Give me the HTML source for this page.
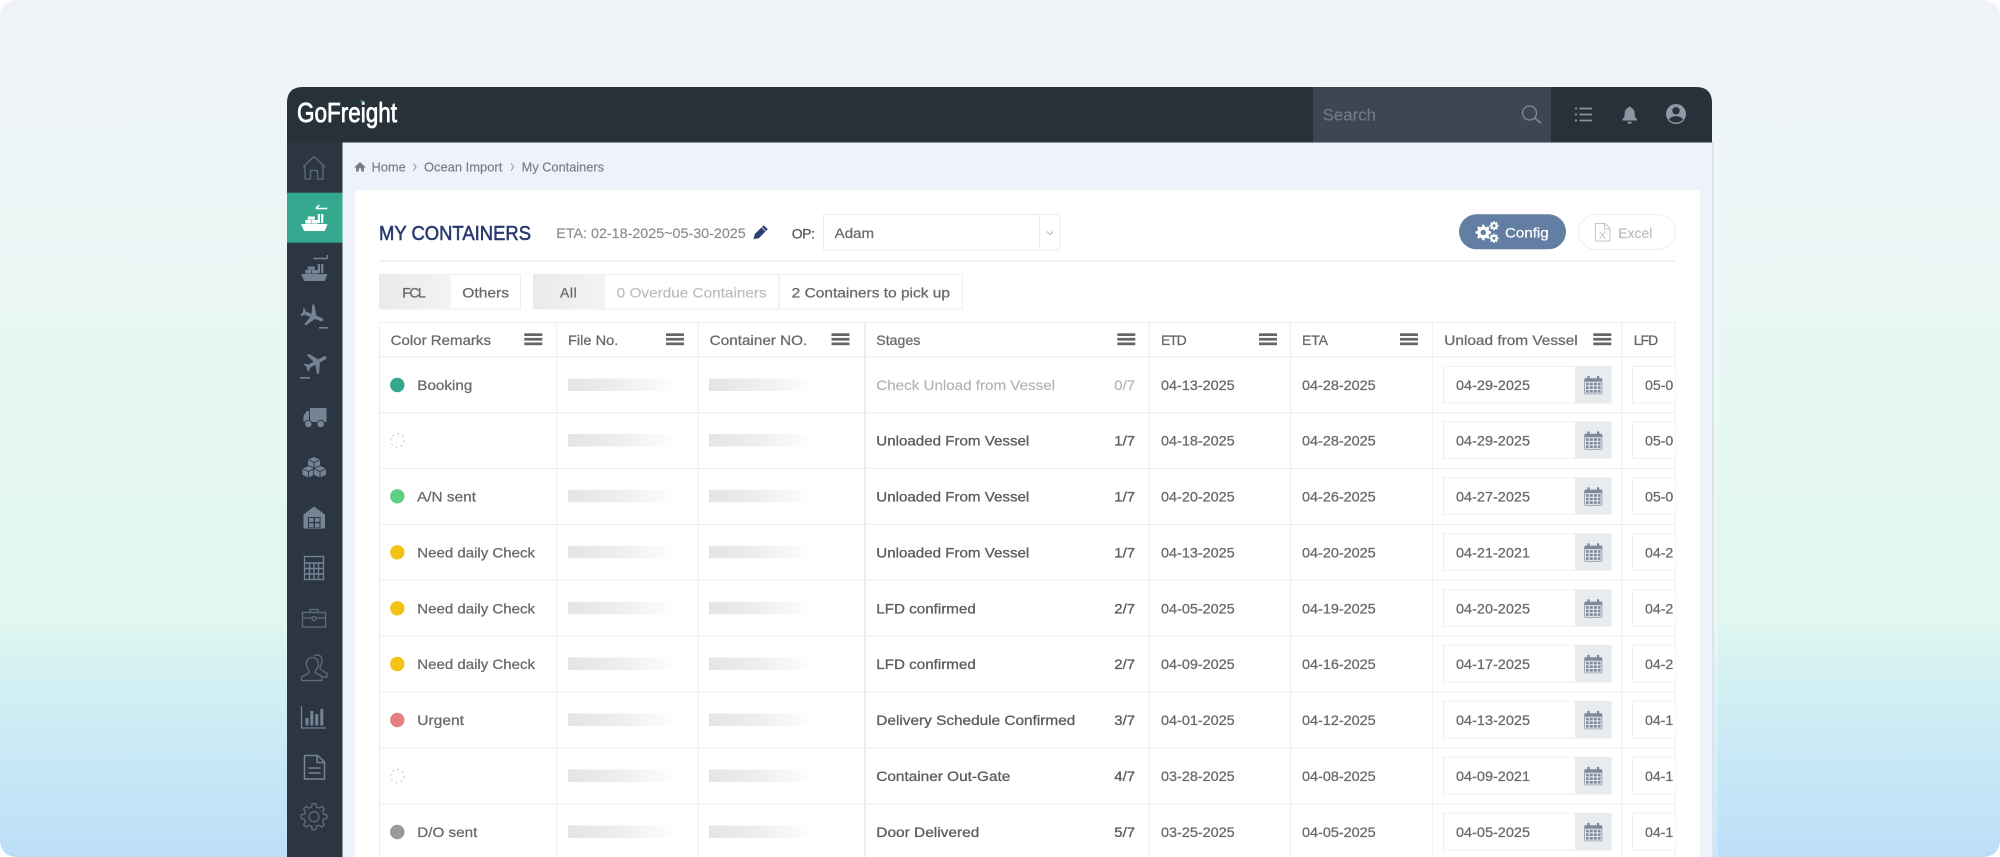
<!DOCTYPE html>
<html lang="en"><head><meta charset="utf-8"><title>GoFreight - My Containers</title>
<style>
html,body{margin:0;padding:0;background:#fff;width:2000px;height:857px;overflow:hidden}
svg{display:block;filter:blur(.35px)}
text{font-family:"Liberation Sans",sans-serif;font-size:14px}
.t{fill:#6a6a6a;stroke:#6a6a6a;stroke-width:.28}
.s{fill:#5c5c5c;stroke:#5c5c5c;stroke-width:.3}
.m{fill:#b2b2b2;stroke:#b2b2b2;stroke-width:.15}
.ic{fill:none;stroke:#5f6c7d;stroke-width:1.3}
.fi{fill:#768395}
</style></head><body>
<svg xmlns="http://www.w3.org/2000/svg" width="2000" height="857" viewBox="0 0 2000 857">
<defs>
<linearGradient id="bg" x1="0" y1="0" x2="0" y2="1">
<stop offset="0" stop-color="#f0f3f8"/><stop offset=".27" stop-color="#ebf6f5"/><stop offset=".55" stop-color="#e4f7f1"/><stop offset=".72" stop-color="#e1f7f0"/><stop offset=".8" stop-color="#d2eff3"/><stop offset=".9" stop-color="#c6e7f6"/><stop offset="1" stop-color="#bcdff8"/>
</linearGradient>
<linearGradient id="sk"><stop offset="0" stop-color="#e4e4e4"/><stop offset=".5" stop-color="#efefef"/><stop offset="1" stop-color="#ffffff"/></linearGradient>
<linearGradient id="tabf"><stop offset="0" stop-color="#eaeaea"/><stop offset="1" stop-color="#f3f3f3"/></linearGradient>
<g id="sk2"><rect x="568" y="-6.5" width="110" height="12.5" fill="url(#sk)"/><rect x="709" y="-6.5" width="105" height="12.5" fill="url(#sk)"/></g>
<g id="ham"><rect width="18" height="2.7" fill="#666"/><rect y="4.6" width="18" height="2.7" fill="#666"/><rect y="9.2" width="18" height="2.7" fill="#666"/></g>
<g id="cal"><rect x="-9" y="-6.5" width="18" height="16" rx="1" fill="#7d8a99"/><rect x="-6" y="-9" width="2.4" height="4.5" rx="1" fill="#7d8a99"/><rect x="3.6" y="-9" width="2.4" height="4.5" rx="1" fill="#7d8a99"/>
<path d="M-7.8-2.5H7.8V8.3H-7.8ZM-7.8 1.1H7.8M-7.8 4.7H7.8M-4.1-2.5V8.3M0-2.5V8.3M4.1-2.5V8.3" fill="none" stroke="#e9ecef" stroke-width="1"/></g>
<g id="inp"><rect x="1443.5" y="-18.7" width="167.5" height="36.7" fill="#fff" stroke="#eeeeee"/><rect x="1575" y="-19" width="36" height="37" fill="#e9ecef"/><use href="#cal" x="1593.3" y="-.2"/><path d="M1675-18.7H1632.5V18H1675" fill="#fff" stroke="#eeeeee"/></g>
<path id="gearp" d="M9.7-2.4L12.9-1.8 12.9 1.8 9.7 2.4 8.6 5.2 10.4 7.8 7.8 10.4 5.2 8.6 2.4 9.7 1.8 12.9-1.8 12.9-2.4 9.7-5.2 8.6-7.8 10.4-10.4 7.8-8.6 5.2-9.7 2.4-12.9 1.8-12.9-1.8-9.7-2.4-8.6-5.2-10.4-7.8-7.8-10.4-5.2-8.6-2.4-9.7-1.8-12.9 1.8-12.9 2.4-9.7 5.2-8.6 7.8-10.4 10.4-7.8 8.6-5.2Z"/>
<g id="shipb"><path d="M-13.2 6H13.2L10.5 13H-10.2Z"/><rect x="-9" y="2" width="6" height="3.6"/><rect x="-6.5" y="-1.5" width="7" height="3.2"/><rect x="-2.5" y="2" width="6" height="3.6"/><rect x="3.5" y="-4" width="2.2" height="9"/><rect x="6.8" y="-4" width="2.2" height="9"/></g>
<path id="plane" d="M21 16v-2l-8-5V3.5c0-.83-.67-1.5-1.5-1.5S10 2.67 10 3.5V9l-8 5v2l8-2.5V19l-2 1.5V22l3.5-1 3.5 1v-1.5L13 19v-5.5l8 2.5z"/>
<clipPath id="win"><path d="M287 857V103Q287 87 303 87H1696Q1712 87 1712 103V857Z"/></clipPath>
</defs>

<rect width="2000" height="857" rx="16" fill="url(#bg)"/>
<rect x="1712" y="142" width="2" height="715" fill="#dfe3ec"/>
<rect x="1714" y="142" width="4" height="715" fill="#ffffff" opacity=".25"/>

<g clip-path="url(#win)">
<rect x="287" y="87" width="1425" height="770" fill="#eef2fb"/>
<rect x="287" y="87" width="1425" height="55.5" fill="#27313a"/>
<rect x="287" y="142.5" width="55.5" height="715" fill="#2c3643"/>
<rect x="1313" y="87" width="238" height="55.5" fill="#3c4654"/>
<rect x="287" y="192.7" width="55.5" height="50" fill="#35a990"/>
</g>

<!-- Top bar -->
<text x="297" y="122" style="font-size:28px" fill="#fff" stroke="#fff" stroke-width=".8" textLength="100" lengthAdjust="spacingAndGlyphs">GoFreight</text>
<circle cx="362" cy="101.5" r="1.4" fill="#35a990"/>
<text x="1322.7" y="120.7" style="font-size:17px" fill="#6f7a88" stroke="#6f7a88" stroke-width=".2" textLength="53.3" lengthAdjust="spacingAndGlyphs">Search</text>
<circle cx="1529.5" cy="113" r="7" fill="none" stroke="#7f8a96" stroke-width="1.3"/><path d="M1534.5 118L1541 123" stroke="#7f8a96" stroke-width="1.6" fill="none"/>
<path d="M1579.5 108.5H1592M1579.5 114.5H1592M1579.5 120.5H1592" stroke="#8a95a1" stroke-width="1.8"/><path d="M1575 108.5H1577M1575 114.5H1577M1575 120.5H1577" stroke="#8a95a1" stroke-width="1.8"/>
<path d="M1629.7 106.5c-.9 0-1.3.6-1.3 1.3-2.6.8-3.7 3-3.7 5.7 0 3-1 4.6-2.3 5.8v1.2h14.6v-1.2c-1.3-1.2-2.3-2.8-2.3-5.8 0-2.7-1.1-4.9-3.7-5.7 0-.7-.4-1.3-1.3-1.3zM1627.5 121.7a2.2 2.2 0 0 0 4.4 0z" fill="#8a95a1"/>
<circle cx="1676" cy="114" r="10" fill="#8e99a5"/><circle cx="1676" cy="110.8" r="3.7" fill="#27313a"/><path d="M1669 119.5c1.5-2.4 4-3.2 7-3.2s5.5.8 7 3.2c-1.7 2-4.2 3-7 3s-5.3-1-7-3z" fill="#27313a"/>

<!-- Sidebar icons -->
<g transform="translate(314,168)" class="ic"><path d="M-11-1L0-11.5 11-1M-9-3V11H-3.5V2.5H3.500V11H9V-3"/></g>
<g transform="translate(314.3,218)" fill="#fff"><use href="#shipb"/><path d="M13-9.5H1.5M1.5-9.5L5-13" fill="none" stroke="#fff" stroke-width="1.5"/></g>
<g transform="translate(314.3,268)" class="fi"><use href="#shipb"/><path d="M-1-9.5H13M13-9.5V-13" fill="none" stroke="#768395" stroke-width="1.5"/></g>
<g transform="translate(312.5,316) rotate(112) scale(1.15) translate(-11.5,-12)" class="fi"><use href="#plane"/></g><rect x="319" y="327" width="9" height="1.6" class="fi"/>
<g transform="translate(316,362.5) rotate(62) scale(1.15) translate(-11.5,-12)" class="fi"><use href="#plane"/></g><rect x="300" y="377" width="10" height="1.6" class="fi"/>
<g class="fi"><path d="M310 408H326.5V422H310ZM303.5 422V415.5L307 411H309V422Z"/><circle cx="308.3" cy="424" r="3.8" stroke="#2c3643"/><circle cx="320.7" cy="424" r="3.8" stroke="#2c3643"/></g>
<g class="fi" stroke="#2c3643" stroke-width=".9"><path d="M314 456.5L320.5 459.5V466L314 469 307.5 466V459.5Z"/><path d="M308.5 465.5L315 468.5V475L308.5 478 302 475V468.5Z"/><path d="M320 465.5L326.5 468.5V475L320 478 313.5 475V468.5Z"/><path d="M307.500 459.500L314 462.500 320.500 459.500M314 462.500V469M302 468.500L308.500 471.500 315 468.500M308.500 471.500V478M313.500 468.500L320 471.500 326.500 468.500M320 471.500V478" fill="none"/></g>
<path class="fi" fill-rule="evenodd" d="M314 506.5L325 514.5V528.5H303.5V514.5ZM308 517V528H320.5V517ZM309 518H313.6V522H309ZM315 518H319.5V522H315ZM309 523.2H313.6V527.5H309ZM315 523.2H319.5V527.5H315Z"/>
<g><rect x="304.5" y="556.5" width="19" height="23" fill="none" stroke="#768395" stroke-width="1.3"/><path d="M304.5 563H323.5M304.5 568.5H323.5M304.5 574H323.5M309.5 563V580M314 563V580M318.5 563V580" fill="none" stroke="#768395" stroke-width="1.4"/></g>
<g class="ic"><rect x="302.5" y="612.5" width="23" height="14.5"/><path d="M310 612.5V609.5H318V612.5M302.5 618H311.5M316.5 618H325.5"/><circle cx="314" cy="618.5" r="2"/></g>
<g class="ic"><path d="M301.5 680.5V677L308 673.5C309.5 672.5 309.5 671 308.5 670 306.5 667.5 306 664.5 306.5 662 307 659 309.5 657.5 312 657.5S317.5 659 318 662C318.5 664.5 318 667.5 316 670 315 671 315 672.5 316.5 673.5L322 676.5V680.5Z"/><path d="M314 656C316 654.5 320 654.5 321.5 657.5 322.5 660 322 664 320 666.5 319.5 668 320 669 321.5 670L327 673.5V677H323"/></g>
<g><path d="M301.5 706V728H326" fill="none" stroke="#768395" stroke-width="1.3"/><rect class="fi" x="305.5" y="718" width="3" height="7.5"/><rect class="fi" x="310.3" y="711" width="3" height="14.5"/><rect class="fi" x="315.3" y="714" width="3" height="11.5"/><rect class="fi" x="320.3" y="709" width="3" height="16.5"/></g>
<g fill="none" stroke="#768395" stroke-width="1.5"><path d="M304.5 755.5H317.5L324.5 762V779H304.5ZM317 755.5V762.5H324.5M308.5 768H320.5M308.5 773H320.5"/></g>
<g transform="translate(314,816.7)" class="ic"><use href="#gearp"/><circle r="5"/></g>

<!-- Panel -->
<path d="M360 162L366 167.500H364V171.500H361.200V168.500H358.800V171.500H356V167.500H354Z" fill="#757f8c"/>
<text x="371.7" y="171.5" style="font-size:12.5px" fill="#737d8a" stroke="#737d8a" stroke-width=".15" textLength="34" lengthAdjust="spacingAndGlyphs">Home</text>
<path d="M413.5 163.5L416 167 413.5 170.5M511 163.5L513.5 167 511 170.5" fill="none" stroke="#8a93a0" stroke-width="1"/>
<text x="424" y="171.5" style="font-size:12.5px" fill="#737d8a" stroke="#737d8a" stroke-width=".15" textLength="78.3" lengthAdjust="spacingAndGlyphs">Ocean Import</text>
<text x="521.7" y="171.5" style="font-size:12.5px" fill="#737d8a" stroke="#737d8a" stroke-width=".15" textLength="82.3" lengthAdjust="spacingAndGlyphs">My Containers</text>
<rect x="355" y="190" width="1345" height="667" fill="#fff"/>

<text x="379" y="240" style="font-size:20px" fill="#2a3a6e" stroke="#2a3a6e" stroke-width=".55" textLength="152" lengthAdjust="spacingAndGlyphs">MY CONTAINERS</text>
<text x="556.3" y="238" fill="#8c8c8c" stroke="#8c8c8c" stroke-width=".15" textLength="189.4" lengthAdjust="spacingAndGlyphs">ETA: 02-18-2025~05-30-2025</text>
<path d="M753.5 239.3L754.8 234 763.7 225.200 767.800 229.300 758.900 238.100Z" fill="#2c3e75"/><path d="M761.800 227.200L765.800 231.200" stroke="#fff" stroke-width=".7"/>
<text x="791.7" y="238.3" class="s" textLength="23.3">OP:</text>
<rect x="823.5" y="214.5" width="236.5" height="35.5" fill="#fff" stroke="#eeeeee"/><path d="M1039.5 214.5V250" stroke="#eeeeee"/>
<path d="M1047 231.5L1050 234.5 1053 231.5" fill="none" stroke="#b5b5b5"/>
<text x="834.7" y="238" class="t" textLength="39.3" lengthAdjust="spacingAndGlyphs">Adam</text>

<rect x="1459" y="214.3" width="107" height="35" rx="17.5" fill="#627fa3"/>
<g fill="#fff"><use href="#gearp" transform="translate(1483.3,232.5) scale(.6)"/><use href="#gearp" transform="translate(1494,225.8) scale(.36)"/><use href="#gearp" transform="translate(1494,238.3) scale(.36)"/></g>
<g fill="#627fa3"><circle cx="1483.3" cy="232.5" r="2.7"/><circle cx="1494" cy="225.8" r="1.5"/><circle cx="1494" cy="238.3" r="1.5"/></g>
<text x="1505" y="237.3" fill="#fff" stroke="#fff" stroke-width=".2" textLength="43.7" lengthAdjust="spacingAndGlyphs">Config</text>
<rect x="1578.5" y="214.5" width="97" height="35" rx="17.5" fill="#fff" stroke="#eeeeee"/>
<path d="M1595.5 223.5H1605L1610 228.5V241H1595.5ZM1604.5 223.5V229H1610M1599.5 231.5L1605.5 239M1605.5 231.5L1599.5 239" fill="none" stroke="#c4c4c4"/>
<text x="1618.3" y="238" fill="#bcbcbc" stroke="#bcbcbc" stroke-width=".2" textLength="34" lengthAdjust="spacingAndGlyphs">Excel</text>

<rect x="379" y="260.5" width="1296" height="1.5" fill="#eeeeee"/>

<!-- Tabs -->
<rect x="379.5" y="274.5" width="141" height="34.5" fill="#fff" stroke="#eeeeee"/>
<rect x="379" y="274" width="71.5" height="35" fill="url(#tabf)"/>
<text x="402.3" y="297.3" class="t" textLength="23.4">FCL</text>
<text x="462.3" y="297.3" class="t" textLength="46.7" lengthAdjust="spacingAndGlyphs">Others</text>
<rect x="533.5" y="274.5" width="429" height="34.5" fill="#fff" stroke="#eeeeee"/>
<rect x="533" y="274" width="72" height="35" fill="url(#tabf)"/>
<path d="M779 274.5V309" stroke="#eeeeee" stroke-width="1.5"/>
<text x="560" y="297.3" class="t" textLength="16.7">All</text>
<text x="616.7" y="297.3" fill="#bcbcbc" stroke="#bcbcbc" stroke-width=".15" textLength="150" lengthAdjust="spacingAndGlyphs">0 Overdue Containers</text>
<text x="791.7" y="297.3" class="t" textLength="158.3" lengthAdjust="spacingAndGlyphs">2 Containers to pick up</text>

<!-- Table frame -->
<path d="M379.5 857V322.5H1675V857" fill="none" stroke="#eceeef"/>
<path d="M379.5 356.7H1675M379.5 412.7H1675M379.5 468.4H1675M379.5 524.4H1675M379.5 580.2H1675M379.5 636.2H1675M379.5 692H1675M379.5 747.8H1675M379.5 803.8H1675" stroke="#eceeef" stroke-width="1.1" fill="none"/>
<path d="M556.7 322.5V857M698.3 322.5V857M1149.3 322.5V857M1290.5 322.5V857M1432.3 322.5V857M1621.7 322.5V857" stroke="#eceeef" fill="none"/>
<rect x="864" y="322.5" width="2" height="534.5" fill="#eceeef"/>

<!-- Header -->
<text x="390.7" y="345" class="t" textLength="100.3" lengthAdjust="spacingAndGlyphs">Color Remarks</text><use href="#ham" x="524.3" y="333.3"/>
<text x="568" y="345" class="t" textLength="50.3" lengthAdjust="spacingAndGlyphs">File No.</text><use href="#ham" x="666" y="333.3"/>
<text x="709.7" y="345" class="t" textLength="97.6" lengthAdjust="spacingAndGlyphs">Container NO.</text><use href="#ham" x="831.5" y="333.3"/>
<text x="876.3" y="345" class="t" textLength="44" lengthAdjust="spacingAndGlyphs">Stages</text><use href="#ham" x="1117.3" y="333.3"/>
<text x="1161" y="345" class="t" textLength="25.7">ETD</text><use href="#ham" x="1259" y="333.3"/>
<text x="1302" y="345" class="t" textLength="26">ETA</text><use href="#ham" x="1400" y="333.3"/>
<text x="1444.3" y="345" class="t" textLength="133.4" lengthAdjust="spacingAndGlyphs">Unload from Vessel</text><use href="#ham" x="1593.3" y="333.3"/>
<text x="1633.7" y="345" class="t" textLength="24.6">LFD</text>

<!-- Rows -->
<g transform="translate(0,385)"><circle cx="397.3" r="7.2" fill="#35a990"/><text x="417.3" y="5" class="t" textLength="55" lengthAdjust="spacingAndGlyphs">Booking</text><use href="#sk2"/>
<text x="876.3" y="5" class="m" textLength="178.7" lengthAdjust="spacingAndGlyphs">Check Unload from Vessel</text><text x="1114.3" y="5" class="m" textLength="20.7" lengthAdjust="spacingAndGlyphs">0/7</text>
<text x="1161" y="5" class="t" textLength="73.7" lengthAdjust="spacingAndGlyphs">04-13-2025</text><text x="1302" y="5" class="t" textLength="73.7" lengthAdjust="spacingAndGlyphs">04-28-2025</text>
<use href="#inp"/><text x="1456" y="5" class="t" textLength="74" lengthAdjust="spacingAndGlyphs">04-29-2025</text><text x="1645" y="5" class="t" textLength="28.3" lengthAdjust="spacingAndGlyphs">05-0</text></g>

<g transform="translate(0,440.5)"><circle cx="397.3" r="6.7" fill="none" stroke="#c4c4c4" stroke-dasharray="2 3.2"/><use href="#sk2"/>
<text x="876.3" y="5" class="s" textLength="153" lengthAdjust="spacingAndGlyphs">Unloaded From Vessel</text><text x="1114.3" y="5" class="s" textLength="20.7" lengthAdjust="spacingAndGlyphs">1/7</text>
<text x="1161" y="5" class="t" textLength="73.7" lengthAdjust="spacingAndGlyphs">04-18-2025</text><text x="1302" y="5" class="t" textLength="73.7" lengthAdjust="spacingAndGlyphs">04-28-2025</text>
<use href="#inp"/><text x="1456" y="5" class="t" textLength="74" lengthAdjust="spacingAndGlyphs">04-29-2025</text><text x="1645" y="5" class="t" textLength="28.3" lengthAdjust="spacingAndGlyphs">05-0</text></g>

<g transform="translate(0,496.3)"><circle cx="397.3" r="7.2" fill="#5dd083"/><text x="417" y="5" class="t" textLength="59" lengthAdjust="spacingAndGlyphs">A/N sent</text><use href="#sk2"/>
<text x="876.3" y="5" class="s" textLength="153" lengthAdjust="spacingAndGlyphs">Unloaded From Vessel</text><text x="1114.3" y="5" class="s" textLength="20.7" lengthAdjust="spacingAndGlyphs">1/7</text>
<text x="1161" y="5" class="t" textLength="73.7" lengthAdjust="spacingAndGlyphs">04-20-2025</text><text x="1302" y="5" class="t" textLength="73.7" lengthAdjust="spacingAndGlyphs">04-26-2025</text>
<use href="#inp"/><text x="1456" y="5" class="t" textLength="74" lengthAdjust="spacingAndGlyphs">04-27-2025</text><text x="1645" y="5" class="t" textLength="28.3" lengthAdjust="spacingAndGlyphs">05-0</text></g>

<g transform="translate(0,552.3)"><circle cx="397.3" r="7.2" fill="#f3c212"/><text x="417.3" y="5" class="t" textLength="117.7" lengthAdjust="spacingAndGlyphs">Need daily Check</text><use href="#sk2"/>
<text x="876.3" y="5" class="s" textLength="153" lengthAdjust="spacingAndGlyphs">Unloaded From Vessel</text><text x="1114.3" y="5" class="s" textLength="20.7" lengthAdjust="spacingAndGlyphs">1/7</text>
<text x="1161" y="5" class="t" textLength="73.7" lengthAdjust="spacingAndGlyphs">04-13-2025</text><text x="1302" y="5" class="t" textLength="73.7" lengthAdjust="spacingAndGlyphs">04-20-2025</text>
<use href="#inp"/><text x="1456" y="5" class="t" textLength="74" lengthAdjust="spacingAndGlyphs">04-21-2021</text><text x="1645" y="5" class="t" textLength="28.3" lengthAdjust="spacingAndGlyphs">04-2</text></g>

<g transform="translate(0,608.3)"><circle cx="397.3" r="7.2" fill="#f3c212"/><text x="417.3" y="5" class="t" textLength="117.7" lengthAdjust="spacingAndGlyphs">Need daily Check</text><use href="#sk2"/>
<text x="876.3" y="5" class="s" textLength="99.5" lengthAdjust="spacingAndGlyphs">LFD confirmed</text><text x="1114.3" y="5" class="s" textLength="20.7" lengthAdjust="spacingAndGlyphs">2/7</text>
<text x="1161" y="5" class="t" textLength="73.7" lengthAdjust="spacingAndGlyphs">04-05-2025</text><text x="1302" y="5" class="t" textLength="73.7" lengthAdjust="spacingAndGlyphs">04-19-2025</text>
<use href="#inp"/><text x="1456" y="5" class="t" textLength="74" lengthAdjust="spacingAndGlyphs">04-20-2025</text><text x="1645" y="5" class="t" textLength="28.3" lengthAdjust="spacingAndGlyphs">04-2</text></g>

<g transform="translate(0,664)"><circle cx="397.3" r="7.2" fill="#f3c212"/><text x="417.3" y="5" class="t" textLength="117.7" lengthAdjust="spacingAndGlyphs">Need daily Check</text><use href="#sk2"/>
<text x="876.3" y="5" class="s" textLength="99.5" lengthAdjust="spacingAndGlyphs">LFD confirmed</text><text x="1114.3" y="5" class="s" textLength="20.7" lengthAdjust="spacingAndGlyphs">2/7</text>
<text x="1161" y="5" class="t" textLength="73.7" lengthAdjust="spacingAndGlyphs">04-09-2025</text><text x="1302" y="5" class="t" textLength="73.7" lengthAdjust="spacingAndGlyphs">04-16-2025</text>
<use href="#inp"/><text x="1456" y="5" class="t" textLength="74" lengthAdjust="spacingAndGlyphs">04-17-2025</text><text x="1645" y="5" class="t" textLength="28.3" lengthAdjust="spacingAndGlyphs">04-2</text></g>

<g transform="translate(0,720)"><circle cx="397.3" r="7.2" fill="#e38080"/><text x="417.3" y="5" class="t" textLength="46.7" lengthAdjust="spacingAndGlyphs">Urgent</text><use href="#sk2"/>
<text x="876.3" y="5" class="s" textLength="199" lengthAdjust="spacingAndGlyphs">Delivery Schedule Confirmed</text><text x="1114.3" y="5" class="s" textLength="20.7" lengthAdjust="spacingAndGlyphs">3/7</text>
<text x="1161" y="5" class="t" textLength="73.7" lengthAdjust="spacingAndGlyphs">04-01-2025</text><text x="1302" y="5" class="t" textLength="73.7" lengthAdjust="spacingAndGlyphs">04-12-2025</text>
<use href="#inp"/><text x="1456" y="5" class="t" textLength="74" lengthAdjust="spacingAndGlyphs">04-13-2025</text><text x="1645" y="5" class="t" textLength="28.3" lengthAdjust="spacingAndGlyphs">04-1</text></g>

<g transform="translate(0,776)"><circle cx="397.3" r="6.7" fill="none" stroke="#c4c4c4" stroke-dasharray="2 3.2"/><use href="#sk2"/>
<text x="876.3" y="5" class="s" textLength="134" lengthAdjust="spacingAndGlyphs">Container Out-Gate</text><text x="1114.3" y="5" class="s" textLength="20.7" lengthAdjust="spacingAndGlyphs">4/7</text>
<text x="1161" y="5" class="t" textLength="73.7" lengthAdjust="spacingAndGlyphs">03-28-2025</text><text x="1302" y="5" class="t" textLength="73.7" lengthAdjust="spacingAndGlyphs">04-08-2025</text>
<use href="#inp"/><text x="1456" y="5" class="t" textLength="74" lengthAdjust="spacingAndGlyphs">04-09-2021</text><text x="1645" y="5" class="t" textLength="28.3" lengthAdjust="spacingAndGlyphs">04-1</text></g>

<g transform="translate(0,832)"><circle cx="397.3" r="7.2" fill="#999999"/><text x="417.3" y="5" class="t" textLength="60" lengthAdjust="spacingAndGlyphs">D/O sent</text><use href="#sk2"/>
<text x="876.3" y="5" class="s" textLength="103" lengthAdjust="spacingAndGlyphs">Door Delivered</text><text x="1114.3" y="5" class="s" textLength="20.7" lengthAdjust="spacingAndGlyphs">5/7</text>
<text x="1161" y="5" class="t" textLength="73.7" lengthAdjust="spacingAndGlyphs">03-25-2025</text><text x="1302" y="5" class="t" textLength="73.7" lengthAdjust="spacingAndGlyphs">04-05-2025</text>
<use href="#inp"/><text x="1456" y="5" class="t" textLength="74" lengthAdjust="spacingAndGlyphs">04-05-2025</text><text x="1645" y="5" class="t" textLength="28.3" lengthAdjust="spacingAndGlyphs">04-1</text></g>
</svg>
</body></html>
